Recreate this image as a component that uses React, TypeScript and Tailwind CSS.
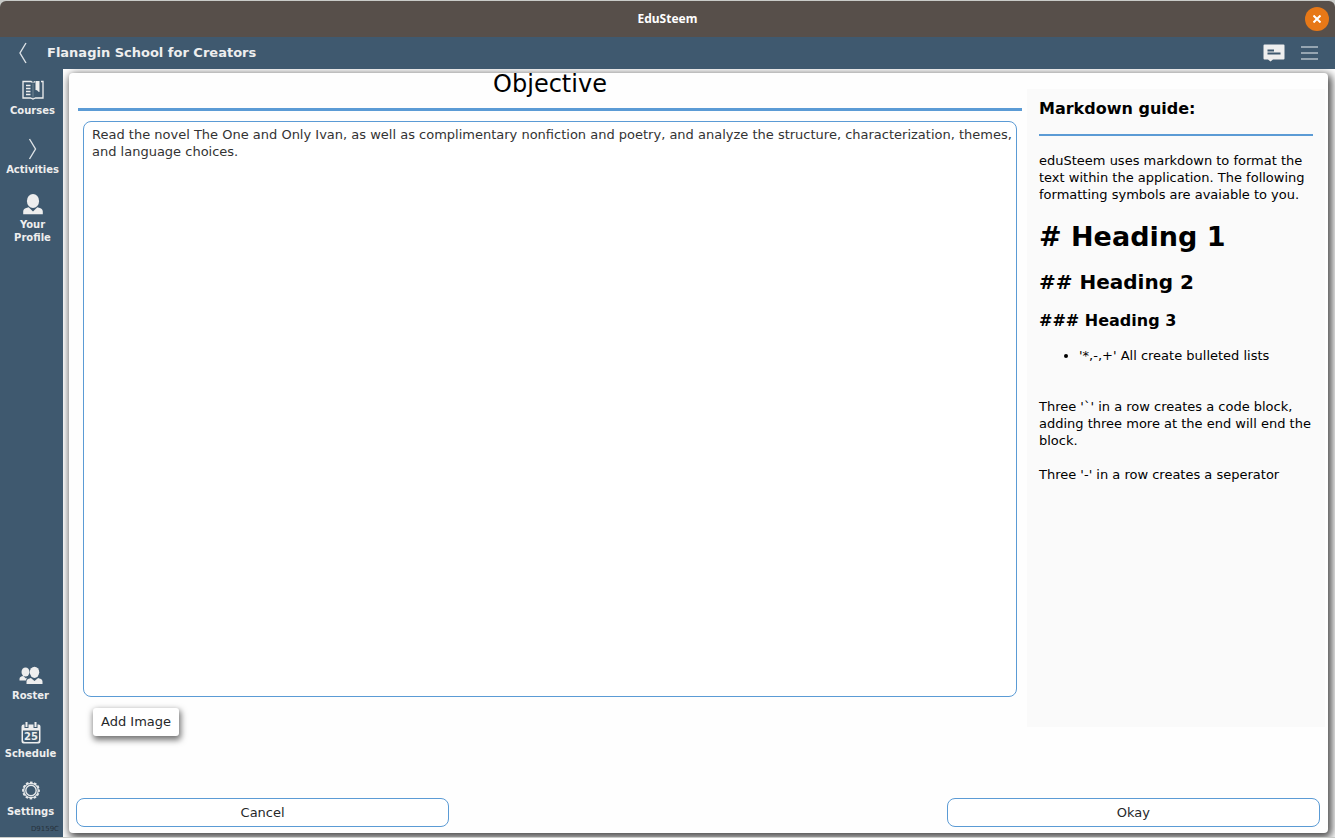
import React from "react";

function ChevronIcon({ flip = false }: { flip?: boolean }) {
  return (
    <svg width="10" height="22" viewBox="0 0 10 22" fill="none" stroke="#dde2e6" strokeWidth="1.4" aria-hidden="true">
      <path d={flip ? "M8 1 2 11l6 10" : "M1.5 1 7.500 11l-6 10"} />
    </svg>
  );
}

function CoursesIcon() {
  return (
    <svg width="22" height="22" viewBox="0 0 22 22" fill="none" stroke="#eeeeee" aria-hidden="true">
      <path d="M10.500 3.500 9 2.500H1v16.500h7.500l2.500 1 2.500-1H21V2.500h-2M13 2.500l-1.500 1" strokeWidth="1.300" />
      <path d="M4 6.500h4.500M4 9.500h4.500M4 12.500h4.500M4 15.500h4.500" strokeWidth="1.400" />
      <path d="M11 4.500v14.500" strokeWidth=".3" />
      <path d="M13.500 2h4v11l-1-.3-1.500-1.500-1.500-.2z" fill="#eeeeee" stroke="none" />
    </svg>
  );
}

function ProfileIcon() {
  return (
    <svg width="20" height="22" viewBox="0 0 20 22" fill="#eeeeee" aria-hidden="true">
      <ellipse cx="10" cy="8" rx="6.100" ry="7" />
      <path d="M.2 21.200v-2.700c0-2 1.200-3 3-3.500l2.500-.8L10 18.500l4.300-4.300 2.500.8c1.800.5 3 1.500 3 3.500v2.700z" />
    </svg>
  );
}

function RosterIcon() {
  return (
    <svg width="24" height="22" viewBox="0 0 24 22" fill="#eeeeee" aria-hidden="true">
      <ellipse cx="6.500" cy="8" rx="4" ry="4.600" />
      <path d="M.5 16.500v-1.500c0-1.500 1-2.300 2.300-2.700l1.500-.3 2.700 2.400 1.200-.8-1.400 2.900z" />
      <ellipse cx="15.500" cy="8.300" rx="4.700" ry="5.600" />
      <path d="M7.500 20v-2.500c0-1.700 1-2.400 2.400-2.800l2-.6 3.600 2.800 3.600-2.800 2 .6c1.400.4 2.400 1.100 2.400 2.800V20z" />
    </svg>
  );
}

function ScheduleIcon() {
  return (
    <svg width="20" height="22" viewBox="0 0 20 22" aria-hidden="true">
      <path d="M2.500 2.500h15a2 2 0 0 1 2 2v15a2 2 0 0 1-2 2h-15a2 2 0 0 1-2-2v-15a2 2 0 0 1 2-2z" fill="#eeeeee" />
      <path d="M2 8.500h16v9.500a2 2 0 0 1-2 2H4a2 2 0 0 1-2-2z" fill="#3f596f" />
      <path d="M5.500 0v6M14.500 0v6" stroke="#3f596f" strokeWidth="4" />
      <path d="M5.500 0v5M14.500 0v5" stroke="#eeeeee" strokeWidth="2" />
      <text x="10" y="18" textAnchor="middle" fontSize="10" fontWeight="700" fontFamily="DejaVu Sans, sans-serif" fill="#eeeeee">25</text>
    </svg>
  );
}

function SettingsIcon() {
  return (
    <svg width="20" height="22" viewBox="0 0 20 22" fill="none" stroke="#e4e7e9" aria-hidden="true">
      <circle cx="10" cy="10.500" r="8" strokeWidth="1.800" strokeDasharray="2.700 1.489" strokeDashoffset="1.350" />
      <circle cx="10" cy="10.500" r="7.200" strokeWidth="1.200" />
      <circle cx="10" cy="10.500" r="5.200" strokeWidth="1.400" />
    </svg>
  );
}

function NavItem({ label, children }: { label: string; children: React.ReactNode }) {
  return (
    <a href="#" className="flex flex-col items-center gap-[3px] text-center text-[10px] leading-[13px] font-bold text-[#eeeeee]">
      {children}
      <span className="px-2">{label}</span>
    </a>
  );
}

export default function App() {
  return (
    <div className="flex h-screen flex-col bg-[#c9cbc8] pt-px font-['DejaVu_Sans',sans-serif] text-[13px] leading-[17px]">
      <header className="relative flex h-9 shrink-0 items-center justify-center rounded-t-md bg-[#574f4a] pb-0.5">
        <h1 className="font-['Noto_Sans',sans-serif] text-[12px] font-bold text-white">EduSteem</h1>
        <button aria-label="Close window" className="absolute top-1.5 right-1.5 flex size-6 items-center justify-center rounded-full bg-[#e77817]">
          <svg width="8" height="8" viewBox="0 0 8 8" stroke="white" strokeWidth="2" aria-hidden="true">
            <path d="m.5.5 7 7M7.500.5l-7 7" />
          </svg>
        </button>
      </header>

      <div className="flex h-8 shrink-0 items-center bg-[#3f596f] pr-[17px] pl-[18px]">
        <button aria-label="Back">
          <ChevronIcon flip />
        </button>
        <h2 className="ml-[19px] flex-1 pb-0.5 text-[13px] font-bold text-[#eeeeee]">Flanagin School for Creators</h2>
        <button aria-label="Messages">
          <svg width="22" height="18" viewBox="0 0 22 18" aria-hidden="true">
            <path d="M1.500.5h19q1 0 1 1v13q0 1-1 1H10L7.500 17.500 5 15.500H1.500q-1 0-1-1v-13q0-1 1-1z" fill="#eeeeee" />
            <path d="M4.500 6.500H11M4.500 9.500h13" stroke="#3f596f" strokeWidth="2" />
          </svg>
        </button>
        <button aria-label="Menu" className="ml-4">
          <svg width="17" height="14" viewBox="0 0 17 14" stroke="#b4bfc8" strokeWidth="1.300" aria-hidden="true">
            <path d="M0 1h17M0 7h17M0 13h17" />
          </svg>
        </button>
      </div>

      <div className="flex min-h-0 flex-1 pb-px">
        <nav className="flex w-[63px] shrink-0 flex-col justify-between bg-[#3f596f] pt-2.5 pb-0.5">
          <div className="flex flex-col gap-[17px] pl-0.5">
            <NavItem label="Courses"><CoursesIcon /></NavItem>
            <div className="pt-1">
              <NavItem label="Activities"><ChevronIcon /></NavItem>
            </div>
            <NavItem label="Your Profile"><ProfileIcon /></NavItem>
          </div>
          <div className="flex flex-col pr-0.5">
            <div className="flex flex-col gap-5">
              <NavItem label="Roster"><RosterIcon /></NavItem>
              <NavItem label="Schedule"><ScheduleIcon /></NavItem>
              <NavItem label="Settings"><SettingsIcon /></NavItem>
            </div>
            <span className="mt-[5px] pr-0.5 text-right text-[7px] leading-3 text-[#27323c]">D9159C</span>
          </div>
        </nav>

        <main className="flex min-w-0 flex-1 overflow-hidden bg-white pt-1 pr-[7px] pb-1 pl-1.5">
          <section className="flex min-w-0 flex-1 flex-col rounded-[4px] bg-[#fefefe] pb-1.5 shadow-[2px_3px_9px_2px_rgba(0,0,0,0.7)]">
            <div className="flex min-h-0 flex-1 gap-[5px] pr-[3px] pl-[9px]">
              <div className="flex min-w-0 flex-1 flex-col">
                <label htmlFor="objective" className="text-center text-2xl leading-[22px] text-black">Objective</label>
                <hr className="mt-[13px] h-[3px] shrink-0 border-0 bg-[#5b9bd5]" />
                <textarea
                  id="objective"
                  className="mx-[5px] mt-2.5 min-h-0 flex-1 resize-none rounded-lg border border-[#5b9bd5] bg-white py-1 pr-1 pl-2 text-[#333333] outline-none"
                  defaultValue="Read the novel The One and Only Ivan, as well as complimentary nonfiction and poetry, and analyze the structure, characterization, themes, and language choices."
                />
                <button className="mt-[11px] ml-[15px] h-7 shrink-0 self-start rounded-[3px] bg-white px-2 pb-0.5 text-[#26282a] shadow-[1px_3px_6px_1px_rgba(0,0,0,0.55)]">
                  Add Image
                </button>
              </div>

              <aside className="mt-4 mb-[9px] w-[298px] shrink-0 bg-[#fafafa] px-3 pt-2.5 text-black">
                <h3 className="text-base leading-[19px] font-bold">Markdown guide:</h3>
                <hr className="mt-4 h-0.5 border-0 bg-[#5b9bd5]" />
                <p className="mt-4">
                  eduSteem uses markdown to format the text within the application. The following formatting symbols are avaiable to you.
                </p>
                <p className="mt-[18px] text-[27px] leading-8 font-bold"># Heading 1</p>
                <p className="mt-[17px] text-xl leading-6 font-bold">## Heading 2</p>
                <p className="mt-[17px] text-base leading-[19px] font-bold">### Heading 3</p>
                <ul className="mt-[17px] list-disc pl-10">
                  <li>'*,-,+' All create bulleted lists</li>
                </ul>
                <p className="mt-[34px]">Three '`' in a row creates a code block, adding three more at the end will end the block.</p>
                <p className="mt-[17px]">Three '-' in a row creates a seperator</p>
              </aside>
            </div>

            <footer className="mt-[62px] flex shrink-0 justify-between pr-2 pl-[7px] text-[#26282a]">
              <button className="h-[29px] w-[30%] rounded-lg border border-[#5b9bd5] bg-white">Cancel</button>
              <button className="h-[29px] w-[30%] rounded-lg border border-[#5b9bd5] bg-white">Okay</button>
            </footer>
          </section>
        </main>
      </div>
    </div>
  );
}
